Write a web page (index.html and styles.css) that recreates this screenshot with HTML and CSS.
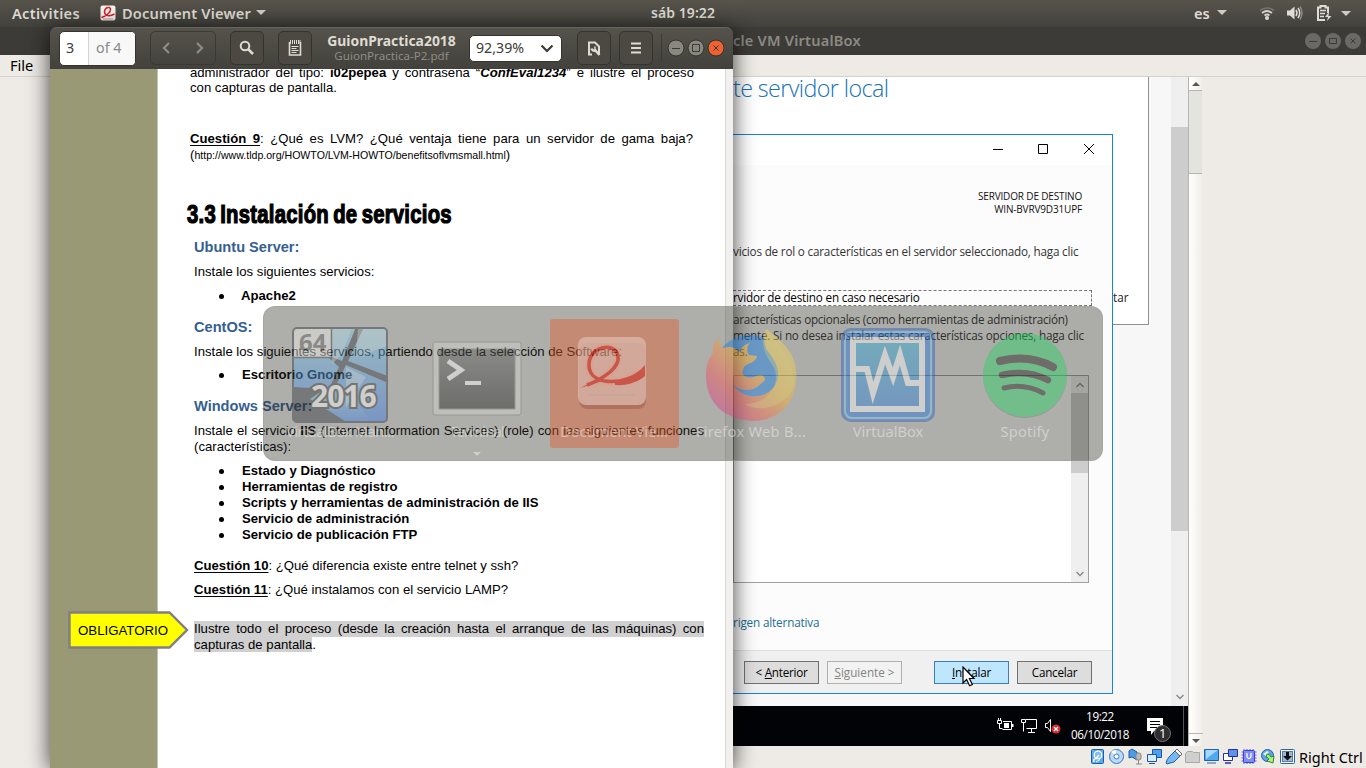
FILE: index.html
```html
<!DOCTYPE html>
<html lang="es">
<head>
<meta charset="utf-8">
<title>Document Viewer</title>
<link rel="stylesheet" href="styles.css">
</head>
<body>
<header class="topbar">
  <span class="tb-act">Activities</span>
  <svg class="tb-app" width="16" height="16" viewBox="0 0 16 16"><rect x=".5" y=".5" width="15" height="15" rx="2" fill="#f4f1ef"/><path d="M1.500 12.500C6 11 11 7.500 10.500 4C9.500 1 4.500 2.500 4.500 7C5 11.500 10 11.500 14.500 9" fill="none" stroke="#d3222a" stroke-width="1.500"/><path d="M3 14h10" stroke="#d99" stroke-width="1"/></svg>
  <span class="tb-doc">Document Viewer</span>
  <svg class="tb-car" width="10" height="6"><path d="M0 0h10L5 5z" fill="#cfccc4"/></svg>
  <span class="tb-clock">sáb 19:22</span>
  <span class="tb-lang">es</span>
  <svg class="tb-car c2" width="10" height="6"><path d="M0 0h10L5 5z" fill="#cfccc4"/></svg>
  <svg class="tb-tray" width="94" height="18" viewBox="1258 4 94 18">
    <g fill="none" stroke="#d6d3cc" stroke-width="1.700"><path d="M1260 10.500q7-5 14 0" stroke="#77746c"/><path d="M1262 13q5-4 10 0"/><path d="M1264.500 15.500q2.500-2 5 0"/></g><circle cx="1267" cy="18" r="2" fill="#dfdcd5"/>
    <path d="M1287 10.500h3l4.500-4v13l-4.500-4h-3z" fill="#dfdcd5"/><g fill="none" stroke="#dfdcd5" stroke-width="1.500"><path d="M1296 10q2 3 0 6"/><path d="M1298 8q3.500 5 0 10"/><path d="M1300 6.500q4 6.500 0 13" stroke="#8b8880"/></g>
    <path d="M1328 13V7.500h-2.500V6h-5v1.500h-2.500V20h7" fill="none" stroke="#dfdcd5" stroke-width="2"/><path d="M1320 10.500h6M1320 13.500h5M1320 16.500h4" stroke="#dfdcd5" stroke-width="1.500"/><path d="M1329 12l-4 5h3l-1 4 4.500-5h-3z" fill="#dfdcd5"/>
    <path d="M1341 11h10l-5 5z" fill="#cfccc4"/>
  </svg>
</header>

<section class="vbox">
  <div class="vb-title"><span class="vb-name">cle VM VirtualBox</span>
    <svg class="vb-btns" width="58" height="18" viewBox="1304 32 58 18"><g fill="#6b6963"><circle cx="1313" cy="41" r="8"/><circle cx="1333" cy="41" r="8"/><circle cx="1353" cy="41" r="8"/></g><path d="M1309 41.500h8M1329.500 38.500h7v5h-7zM1350.500 38.500l5 5m0-5l-5 5" fill="none" stroke="#3c3b37"/></svg>
  </div>
  <div class="vb-menu"><span class="vb-file">File</span></div>
  <div class="vb-body">
    <div class="guest">
      <div class="gs-main">
        <div class="gs-panel">
          <h1 class="gs-h">te servidor local</h1>
          <span class="gs-tar">tar</span>
        </div>
        <div class="gs-bar"><div class="gs-thumb"></div><svg width="8" height="6"><path d="M.5 1L4 4.500 7.500 1" fill="none" stroke="#888" stroke-width="1.300"/></svg></div>
      </div>
      <div class="win-task">
        <svg class="wt-ic" width="66" height="18" viewBox="996 718 66 18"><g fill="none" stroke="#fff"><path d="M1003 722.500h8.500v8h-9"/><path d="M997.500 721.500h4v3h-4zM998.500 721v-2M1000.500 721v-2M999.500 725v4.500h3"/><path d="M1026 720.500h10.500v9h-10M1031.500 730v3M1028 733.500h7"/><path d="M1021.500 720.500h4v3h-4zM1023.500 724v8.500"/><path d="M1045.500 724.500h2l3-4v12l-3-4h-2z"/></g><path d="M1004 724h5v5h-5zM1012 725h1.500v3h-1.500z" fill="#fff"/><circle cx="1056" cy="730" r="4.500" fill="#dc2a33"/><path d="M1054 728l4 4m0-4l-4 4" stroke="#fff" stroke-width="1.200"/></svg>
        <div class="wt-clock"><span class="wt-a">19:22</span><span class="wt-b">06/10/2018</span></div>
        <svg class="wt-note" width="26" height="26" viewBox="1146 717 26 26"><path d="M1147 718h16v13h-9l-3 4v-4h-4z" fill="#fff"/><path d="M1150 721.500h10M1150 724.500h10M1150 727.500h7" stroke="#000"/><circle cx="1162.500" cy="733.500" r="8" fill="#2d2d2f" stroke="#777"/><text x="1159" y="738" class="wt-one">1</text></svg>
        <i class="wt-line"></i>
      </div>
    </div>
    <div class="vb-scroll"><svg width="14" height="13"><path d="M3 9h8L7 5z" fill="#555"/></svg><i class="vs-thumb"></i><i class="vs-track"></i><svg class="vs-dn" width="14" height="13"><path d="M3 5h8L7 9z" fill="#555"/></svg></div>
  </div>
  <div class="vb-status">
    <svg width="206" height="20" viewBox="1090 747 206 20">
      <rect x="1091.500" y="749.500" width="12" height="14" rx="1" fill="#5aa9ee" stroke="#1b5ea8"/><circle cx="1098" cy="755" r="3.800" fill="#7fbdf2" stroke="#fff" stroke-width="1.300"/><path d="M1094 762q-1-3 2-3.500l3-3.500" stroke="#fff" stroke-width="1.500" fill="none"/><path d="M1096 762l4-2.500" stroke="#fff"/>
      <circle cx="1116.500" cy="756.500" r="7" fill="#b8dcfa" stroke="#3a72b8"/><path d="M1116 756l-5-4a6 6 0 0 1 5-2z" fill="#fff"/><circle cx="1116.500" cy="756.500" r="2.500" fill="#fff" stroke="#3f7fce"/>
      <path d="M1129 751l3-2 5 3v8l-5-3-3 1z" fill="#4c9be8" stroke="#1c5ba6"/><rect x="1136" y="753" width="5" height="7" rx="2" fill="#bbb" stroke="#888"/><path d="M1138.500 760v4M1136 764h6" stroke="#888"/>
      <path d="M1152.500 749.500h9v8h-9z" fill="#4aa1f0" stroke="#1c55ac"/><path d="M1147.500 754.500h9v7h-9z" fill="#d8ecfd" stroke="#1c55ac"/><path d="M1149 763.500h6" stroke="#1c55ac"/>
      <path d="M1169 757l6-6 5 5-6 6q-4 1-7 2l-1-1q1-4 3-6z" fill="#74b9f3" stroke="#225fa8"/><path d="M1175 751l2-2 5 5-2 2z" fill="#fff" stroke="#666"/>
      <path d="M1185.500 753.500l2-2h5l1 1h6v10h-14z" fill="#cfcfcf" stroke="#a8a8a8"/>
      <path d="M1204.500 749.500h14v11h-14z" fill="#4faaf2" stroke="#215faf"/><path d="M1206 750h12l-12 9z" fill="#a7d8ff"/><path d="M1207 763h9" stroke="#8ea8c4" stroke-width="2"/>
      <path d="M1223.500 753.500h9v7h-9z" fill="#fff" stroke="#2b2f9c"/><path d="M1228.500 749.500h9v7h-9z" fill="#5b93e6" stroke="#2b2f9c"/><path d="M1225 763h6" stroke="#2b2f9c" stroke-width="1.500"/>
      <path d="M1244 749v15M1247 749v15M1250 749v15M1253 749v15M1241.500 752h15M1241.500 755h15M1241.500 758h15M1241.500 761h15" stroke="#555ee0"/><rect x="1243.500" y="750.500" width="11" height="12" rx="1" fill="#7f8cf4" stroke="#3c3fd0"/><path d="M1247 753v4q2 3 4 0v-4" fill="none" stroke="#fff" stroke-width="1.300"/>
      <circle cx="1267.500" cy="755.500" r="6" fill="#5aa5e8" stroke="#2b5f9d"/><path d="M1263 754l4-3 2 1-3 4z" fill="#e4f4ff"/><path d="M1267 754q3 0 4 3l3-1-1 7-6-2 2-2q-1-2-3-2z" fill="#b5ef7d" stroke="#2d8a2d"/>
      <rect x="1280.500" y="749.500" width="14" height="14" rx="1" fill="#f2f7fc" stroke="#2b65a5"/><rect x="1282.500" y="751.500" width="10" height="10" fill="#9fb6cf" stroke="#5f7c9c"/><path d="M1286 752h3v4h3l-4.500 4.500-4.500-4.500h3z" fill="#111"/>
    </svg>
    <span class="st-ctrl">Right Ctrl</span>
  </div>
</section>

<section class="wizard">
  <div class="wz-title"><svg width="106" height="12" viewBox="992 143 106 12"><g fill="none" stroke="#000"><path d="M993 149.500h10M1038.500 144.500h9v9h-9zM1084 144l10 10m0-10l-10 10"/></g></svg></div>
  <div class="wz-body">
    <div class="wz-dest"><span class="wd-a">SERVIDOR DE DESTINO</span><span class="wd-b">WIN-BVRV9D31UPF</span></div>
    <p class="wl1">vicios de rol o características en el servidor seleccionado, haga clic</p>
    <div class="wz-dot"><span class="wl2">rvidor de destino en caso necesario</span></div>
    <p class="wl3">aracterísticas opcionales (como herramientas de administración)</p>
    <p class="wl4">mente. Si no desea instalar estas características opciones, haga clic</p>
    <p class="wl5">as.</p>
    <div class="wz-list"><div class="wz-sb"><svg width="8" height="6"><path d="M.5 5L4 1.500 7.500 5" fill="none" stroke="#888" stroke-width="1.300"/></svg><i></i><svg width="8" height="6"><path d="M.5 1L4 4.500 7.500 1" fill="none" stroke="#888" stroke-width="1.300"/></svg></div></div>
    <p class="wlink">rigen alternativa</p>
  </div>
  <div class="wz-foot">
    <button class="bt"><span class="b1">&lt; <u>A</u>nterior</span></button>
    <button class="bt dis"><span class="b2"><u>S</u>iguiente &gt;</span></button>
    <button class="bt pri"><span class="b3"><u>I</u>nstalar</span></button>
    <button class="bt"><span class="b4">Cancelar</span></button>
  </div>
</section>
<svg class="cursor" width="14" height="22" viewBox="0 0 14 22"><path d="M1 1v16l3.600-3.400 3 6.200 2.800-1.300-3-6H12z" fill="#fff" stroke="#000" stroke-width="1.200"/></svg>

<section class="evince">
  <div class="ev-head">
    <div class="ev-page"><b class="ep-n">3</b><span class="ep-of">of 4</span></div>
    <div class="ev-nav"><svg width="66" height="34"><path d="M19 12l-5 5 5 5M47 12l5 5-5 5" fill="none" stroke="#8f8c83" stroke-width="2.200"/></svg></div>
    <div class="ev-b find"><svg width="34" height="34"><circle cx="15" cy="15" r="4.300" fill="none" stroke="#dfdbd2" stroke-width="2"/><path d="M18 18l5 5" stroke="#dfdbd2" stroke-width="2.500"/></svg></div>
    <div class="ev-b note"><svg width="34" height="34"><path d="M11.500 11v13h11v-13" fill="none" stroke="#dfdbd2" stroke-width="1.600"/><path d="M12.500 9v4M14.500 9v4M16.500 9v4M18.500 9v4M20.500 9v4M22 9v4" stroke="#dfdbd2"/><path d="M13.500 15.500h7M13.500 17.500h5M13.500 19.500h7M13.500 21.500h5" stroke="#dfdbd2"/></svg></div>
    <div class="ev-ttl"><b class="et1">GuionPractica2018</b><span class="et2">GuionPractica-P2.pdf</span></div>
    <div class="ev-zoom"><span class="ez">92,39%</span><svg width="14" height="9"><path d="M1.500 1.500L7 7l5.500-5.500" fill="none" stroke="#3c3b37" stroke-width="2.200"/></svg></div>
    <div class="ev-b tool"><svg width="34" height="34"><path d="M15 23.500h-3v-12h6l4 4v8" fill="none" stroke="#dfdbd2" stroke-width="2"/><path d="M14.500 17.500a3 3 0 0 0 4 2l4 4.500" fill="none" stroke="#dfdbd2" stroke-width="2.500"/><path d="M18 15.500v4" stroke="#dfdbd2" stroke-width="1.500"/></svg></div>
    <div class="ev-b menu"><svg width="34" height="34"><path d="M12 12.500h10M12 17h10M12 21.500h10" stroke="#dfdbd2" stroke-width="2"/></svg></div>
    <svg class="ev-win" width="64" height="34" viewBox="660 31 64 34"><path d="M661.500 34v28" stroke="#3b3a35"/><g stroke="#34332f"><circle cx="676" cy="48" r="8" fill="#8a877f"/><circle cx="696" cy="48" r="8" fill="#8a877f"/><circle cx="716" cy="48" r="8" fill="#ee6131"/></g><path d="M672 48.500h8M692.500 44.500h7v7h-7zM713.500 45.500l5 5m0-5l-5 5" fill="none" stroke="#3a3935"/></svg>
  </div>
  <div class="ev-doc">
    <div class="olive"></div>
    <article class="page">
      <p class="j p1">administrador del tipo: <b>i02pepea</b> y contraseña “<b><i>ConfEval1234</i></b>” e ilustre el proceso</p>
      <p class="o">con capturas de pantalla.</p>
      <p class="j p2"><b><u>Cuestión 9</u></b>: ¿Qué es LVM? ¿Qué ventaja tiene para un servidor de gama baja?</p>
      <p class="p2b">(<span class="url">http://www.tldp.org/HOWTO/LVM-HOWTO/benefitsoflvmsmall.html</span>)</p>
      <h2><span class="imp">3.3 Instalación de servicios</span></h2>
      <h3 class="m9">Ubuntu Server:</h3>
      <p class="m9">Instale los siguientes servicios:</p>
      <ul class="m8"><li class="ap"><b>Apache2</b></li></ul>
      <h3 class="m15">CentOS:</h3>
      <p class="m9">Instale los siguientes servicios, partiendo desde la selección de Software:</p>
      <ul class="m7"><li><b>Escritorio Gnome</b></li></ul>
      <h3 class="m15">Windows Server:</h3>
      <p class="j m9">Instale el servicio <b>IIS</b> (Internet Information Services) (role) con las siguientes funciones</p>
      <p>(características):</p>
      <ul class="m8">
        <li><b>Estado y Diagnóstico</b></li><li><b>Herramientas de registro</b></li><li><b>Scripts y herramientas de administración de IIS</b></li><li><b>Servicio de administración</b></li><li><b>Servicio de publicación FTP</b></li>
      </ul>
      <p class="m15"><b><u>Cuestión 10</u></b>: ¿Qué diferencia existe entre telnet y ssh?</p>
      <p class="m8"><b><u>Cuestión 11</u></b>: ¿Qué instalamos con el servicio LAMP?</p>
      <p class="j m23 hl">Ilustre todo el proceso (desde la creación hasta el arranque de las máquinas) con</p>
      <p><span class="hl">capturas de pantalla</span>.</p>
    </article>
    <div class="ev-edge"></div>
    <div class="callout"><svg width="121" height="38"><path d="M1.500 1.500h100l17.500 17.500-17.500 17.500h-100z" fill="#ff0" stroke="#808080" stroke-width="2.400"/></svg><span>OBLIGATORIO</span></div>
  </div>
</section>

<nav class="switcher">
  <div class="sw"><svg width="96" height="96" viewBox="0 0 96 96"><defs><linearGradient id="a" x1="0" y1="0" x2="0" y2="1"><stop offset="0" stop-color="#7fd0e8"/><stop offset="1" stop-color="#2f72e8"/></linearGradient><clipPath id="c"><rect x="1" y="1" width="94" height="94" rx="4"/></clipPath></defs><g clip-path="url(#c)"><rect width="96" height="96" fill="#2a2d36"/><path d="M38 0h26L50 34 38 29zM72 0h24v49L56 34zM0 31h37l10 9-10 22L0 60zM54 38l42 18v40H62L44 78 42 62z" fill="url(#a)"/><path d="M36 60l20 4 24 32H56L18 72z" fill="url(#a)"/><path d="M40 1h20l-10 26-10 10zM66 1h29v18L64 30zM54 40l20 10-20 30z" fill="#e6fbff" opacity=".45"/><rect width="39" height="30" fill="#f2f2f2"/></g><rect x="1" y="1" width="94" height="94" rx="4" fill="none" stroke="#2a2d36" stroke-width="2"/><path d="M39.500 1v29.500H1" fill="none" stroke="#333" stroke-width="1.500"/><text x="7" y="24" class="i64">64</text><text x="19" y="80" class="i2016">2016</text></svg><span class="s1">VirtualBox Man...</span></div>
  <div class="sw"><svg width="96" height="96" viewBox="0 0 96 96"><defs><linearGradient id="t" x1="0" y1="0" x2="0" y2="1"><stop offset="0" stop-color="#595959"/><stop offset=".5" stop-color="#343434"/><stop offset="1" stop-color="#111"/></linearGradient></defs><rect x="4" y="15" width="88" height="73" rx="2" fill="#d7d7d4" stroke="#777"/><rect x="10" y="22" width="76" height="60" fill="url(#t)" stroke="#777"/><path d="M19 34l13 9-13 9" fill="none" stroke="#fff" stroke-width="5"/><path d="M36 56h16" stroke="#fff" stroke-width="4"/></svg><span class="s2">Terminal</span><i class="sw-arrow"></i></div>
  <div class="sw on"><svg width="96" height="96" viewBox="0 0 96 96"><rect x="13" y="16" width="67" height="66" rx="8" fill="#712d1e" opacity=".6"/><rect x="12" y="10" width="68" height="68" rx="8" fill="#fff" opacity=".75"/><path d="M22 68h47" stroke="#ccc" stroke-width="2"/><g fill="none" stroke="#f0c4bc" stroke-width="8"><path d="M21 58C39 51 54 40 52 29C49 14 22 19 23 39C24 58 55 59 75 45"/></g><path d="M21 58C39 51 54 40 52 29C49 14 22 19 23 39C24 58 55 59 75 45" fill="none" stroke="#d00d0d" stroke-width="3.600"/><path d="M14 61l20-10 3 3zM49 54C62 53 71 47 79 38v11C72 55 61 59 49 58z" fill="#d00d0d"/></svg><span class="s3">Document Vie...</span></div>
  <div class="sw"><svg width="96" height="96" viewBox="0 0 96 96"><defs><linearGradient id="f" x1="1" y1="0" x2="0" y2="1"><stop offset="0" stop-color="#fff36a"/><stop offset=".45" stop-color="#ffad25"/><stop offset=".7" stop-color="#ff4e4e"/><stop offset="1" stop-color="#c020b8"/></linearGradient></defs><circle cx="47" cy="45" r="37" fill="#0e7df0"/><path d="M16 11c0 5 1 8 4 10 7-2 12-1 16 4 3-5 6-8 11-9-4 5-3 9-1 12l8 1c-1 7-10 7-13 11l-2 6c3 5 7 5 12 4 6-3 11-2 11 3-5 5-10 10-18 10-5 0-10-2-14-5 7 9 15 12 24 11 14-1 22-12 21-24-1-10-7-16-11-22-5-9-2-18 0-21 10 10 27 19 29 41 3 28-14 51-43 51C21 93 3 75 3 49c0-13 4-19 7-23-1-7 2-12 6-15z" fill="url(#f)"/><path d="M62 2c-6 17 2 28 8 37 9 17-4 38-28 38 12 9 39 4 48-15 7-22-17-49-28-60z" fill="#fff04f" opacity=".4"/></svg><span class="s4">Firefox Web B...</span></div>
  <div class="sw"><svg width="96" height="96" viewBox="0 0 96 96"><defs><linearGradient id="v" x1="0" y1="0" x2="0" y2="1"><stop offset="0" stop-color="#28abd9"/><stop offset="1" stop-color="#2477dc"/></linearGradient></defs><rect x="2" y="2" width="92" height="92" rx="9" fill="#1d6fe0" stroke="#2b55b5" stroke-width="2"/><rect x="5" y="5" width="86" height="86" rx="7" fill="none" stroke="#76c6ec" stroke-width="2"/><rect x="13" y="13" width="69" height="69" fill="url(#v)" stroke="#fff" stroke-width="6"/><path d="M15 42h12l6 24L45 28l8 22 7-22 8 28h13" fill="none" stroke="#fff" stroke-width="6"/></svg><span class="s5">VirtualBox</span></div>
  <div class="sw"><svg width="96" height="96" viewBox="0 0 96 96"><circle cx="48" cy="49" r="42" fill="#444" opacity=".5"/><circle cx="48" cy="48" r="42" fill="#1ed760"/><g fill="none" stroke="#191414" stroke-linecap="round"><path d="M23 34q29-7 53 6" stroke-width="8"/><path d="M25 48q25-6 46 5" stroke-width="6.500"/><path d="M27 61q20-5 39 5" stroke-width="5"/></g></svg><span class="s6">Spotify</span></div>
</nav>
</body>
</html>
```
FILE: styles.css
```css
* { box-sizing: border-box; }
body { margin: 0; width: 1366px; height: 768px; overflow: hidden; position: relative; background: #eeebe6; font-family: "Noto Sans", sans-serif; font-size: 14px; color: #000; }
h1, h2, h3, p, ul { margin: 0; padding: 0; font-weight: normal; }
span, p, h1, b { white-space: nowrap; }
svg { display: block; flex: none; }

.topbar { height: 27px; padding-bottom: 1px; display: flex; align-items: center; position: relative; background: linear-gradient(#57544b, #42413c); color: #dfdbd2; font-weight: 600; font-size: 14.600px; line-height: 20px; }
.tb-act { margin-left: 12px; width: 88px; letter-spacing: .28px; }
.tb-doc { margin-left: 6px; width: 134px; letter-spacing: .16px; }
.tb-clock { margin-left: 385px; width: 64px; font-size: 14px; letter-spacing: .07px; }
.tb-lang { margin-left: 479px; width: 23px; }
.tb-tray { margin-left: 31px; }

.vbox { height: 741px; display: flex; flex-direction: column; }
.vb-title { height: 28px; background: #3c3b37; display: flex; align-items: center; color: #8d8a83; font-weight: 600; font-size: 14.600px; letter-spacing: .2px; justify-content: space-between; }
.vb-name { margin-left: 733px; padding-bottom: 2px; }
.vb-btns { margin-right: 4px; }
.vb-menu { height: 22px; border-bottom: 1px solid #d5d1cb; padding-left: 10px; font-size: 14.600px; line-height: 20px; background: #eeebe6; }
.vb-body { height: 669px; display: flex; }
.guest { width: 1023px; margin-left: 165px; display: flex; flex-direction: column; }
.gs-main { height: 629px; display: flex; background: #f7f7f7; justify-content: space-between; }
.gs-panel { width: 984px; height: 248px; background: #fff; border-right: 1px solid #919191; border-bottom: 1px solid #919191; }
.gs-h { font-family: "Open Sans", sans-serif; font-weight: 300; font-size: 23.300px; line-height: 22px; height: 24px; letter-spacing: -.6px; color: #1673b8; margin-left: 568px; }
.gs-tar { display: block; margin: 188px 0 0 948px; font: 11.700px/16px "Open Sans", sans-serif; color: #222; }
.gs-bar { width: 17px; padding-top: 50px; background: #efefef; display: flex; flex-direction: column; align-items: center; justify-content: space-between; padding-bottom: 6px; }
.gs-thumb { width: 17px; height: 404px; background: #cdcdcd; }
.win-task { height: 40px; background: #020306; display: flex; align-items: center; color: #fff; font: 11.700px/18px "Open Sans", sans-serif; letter-spacing: -.4px; }
.wt-ic { margin-left: 831px; }
.wt-clock { margin-left: 8px; padding-bottom: 2px; width: 60px; display: flex; flex-direction: column; align-items: center; }
.wt-note { margin-left: 16px; margin-top: 8px; }
.wt-one { font: 13px "Open Sans", sans-serif; fill: #fff; }
.wt-line { width: 1px; height: 40px; background: #555; margin-left: 11px; }
.vb-scroll { width: 14px; border-left: 1px solid #b8b5b0; background: linear-gradient(90deg, #fff, #f0eeea); display: flex; flex-direction: column; }
.vs-thumb { height: 84px; background: #e3e3df; border-top: 1px solid #b8b5b0; border-bottom: 1px solid #b8b5b0; }
.vs-track { flex: 1; }
.vs-dn { border-top: 1px solid #b8b5b0; }
.vb-status { height: 22px; display: flex; align-items: center; padding-left: 1090px; gap: 3px; font-size: 14.500px; }

.wizard { position: absolute; left: 700px; top: 134px; width: 413px; height: 560px; border: 1px solid #1883d7; background: #fcfcfc; display: flex; flex-direction: column; font: 11.700px/16px "Open Sans", sans-serif; letter-spacing: -.19px; color: #333; }
.wz-title { height: 30px; background: #fff; display: flex; align-items: center; justify-content: flex-end; padding: 0 14px 2px 0; }
.wz-body { height: 485px; padding-left: 32px; display: flex; flex-direction: column; }
.wz-dest { display: flex; flex-direction: column; align-items: flex-end; margin: 25px 30px 0 0; font-size: 10px; line-height: 13px; letter-spacing: -.16px; color: #111; }
.wl1 { margin-top: 27px; }
.wz-dot { margin-top: 31px; width: 359px; height: 16px; border: 1px dashed #777; border-left: 0; line-height: 12px; color: #000; }
.wl3 { margin-top: 5px; letter-spacing: -.27px; }
.wz-list { margin-top: 16px; height: 208px; width: 356px; background: #fff; border: 1px solid #a0a0a0; display: flex; justify-content: flex-end; }
.wz-sb { width: 17px; background: #efefef; display: flex; flex-direction: column; align-items: center; padding: 6px 0 5px; }
.wz-sb i { width: 17px; height: 80px; margin: 5px 0 auto; background: #cdcdcd; }
.wlink { margin-top: 31px; letter-spacing: -.15px; color: #1c6f91; }
.wz-foot { height: 43px; border-top: 1px solid #dfdfdf; background: #f0f0f0; display: flex; padding: 10px 0 0 43px; }
.bt { width: 75px; height: 23px; margin: 0 8px 0 0; padding: 0 0 2px; border: 1px solid #707070; background: #ddd; font: 11.700px/16px "Open Sans", sans-serif; letter-spacing: -.25px; color: #000; }
.dis { border-color: #b0b0b0; background: #f2f2f2; color: #838383; margin-right: 32px; letter-spacing: 0; }
.pri { border-color: #3c7fb1; background: #bee6fd; }
.cursor { position: absolute; left: 962px; top: 666px; }

.evince { position: absolute; left: 50px; top: 27px; width: 683px; height: 741px; border-radius: 7px 7px 0 0; box-shadow: 0 3px 22px rgba(0,0,0,.75); display: flex; flex-direction: column; }
.ev-head { height: 42px; border-radius: 7px 7px 0 0; background: linear-gradient(#55534b, #42413c); border-top: 1px solid #66645b; display: flex; align-items: center; color: #dfdbd2; padding: 0 0 1px 9px; }
.ev-page { width: 77px; height: 35px; border: 1px solid #34332f; border-radius: 5px; background: #fff; display: flex; line-height: 32px; overflow: hidden; color: #3c3b37; font-size: 14.300px; }
.ep-n { width: 29px; padding-left: 6px; font-weight: 400; border-right: 1px solid #d5d5d5; }
.ep-of { padding-left: 7px; flex: 1; background: #f8f8f8; color: #8a8a8a; }
.ev-nav { width: 66px; height: 34px; margin-left: 14px; border: 1px solid #3a3934; border-radius: 5px; }
.ev-nav svg, .ev-b svg { margin: -1px; }
.ev-b { width: 34px; height: 34px; border: 1px solid #34332f; border-radius: 5px; background: #4b4942; }
.find { margin-left: 14px; }
.note { margin-left: 14px; }
.ev-ttl { width: 129px; margin-left: 15px; display: flex; flex-direction: column; align-items: center; font-size: 13.900px; line-height: 15px; }
.et2 { color: #8f8c83; font-size: 11.600px; }
.ev-zoom { width: 93px; height: 27px; margin-left: 13px; border: 1px solid #34332f; border-radius: 5px; background: #fff; color: #3c3b37; display: flex; align-items: center; justify-content: space-between; padding: 0 7px 0 6px; font-size: 14.200px; line-height: 20px; }
.tool { margin-left: 15px; }
.menu { margin-left: 8px; }
.ev-win { margin-left: 7px; }
.ev-doc { height: 699px; display: flex; position: relative; background: #fff; }
.olive { width: 108px; background: #999976; border-right: 1px solid #c4c4ae; }
.page { width: 567px; padding-left: 36px; overflow: hidden; font: 13.150px/16px "Liberation Sans", sans-serif; background: #fff; }
.page p, .page li, .page h3 { height: 16px; }
.page u { text-underline-offset: 2px; }
.page .j { width: 510px; text-align-last: justify; white-space: normal; }
.page .p1 { margin: -4px 0 0 -4px; width: 504px; }
.page .o { margin: -1px 0 0 -4px; }
.page .p2 { margin: 35px 0 0 -4px; width: 503px; }
.page .p2b { margin: 0 0 0 -4px; }
.url { font-size: 10.600px; }
.page h2 { height: 32px; margin: 35px 0 0 -7px; }
.imp { display: inline-block; font: bold 25px/32px "Liberation Sans", sans-serif; letter-spacing: .3px; word-spacing: -2px; transform: scaleX(.812); transform-origin: 0 0; -webkit-text-stroke: 1.200px #000; }
.page h3 { font-weight: bold; font-size: 14.600px; color: #365f91; }
.m7 { margin-top: 7px; } .m8 { margin-top: 8px; } .m9 { margin-top: 9px; } .m15 { margin-top: 15px; } .m23 { margin-top: 23px; }
.page ul { list-style: none; }
.page li { display: flex; padding-left: 25px; align-items: center; }
.page li::before { content: ""; width: 5px; height: 5px; border-radius: 50%; background: #000; margin-right: 18px; margin-top: 1px; }
.page li.ap::before { margin-right: 17px; }
.hl { background: #d0d0d0; }
.ev-edge { width: 8px; background: #f1f0ee; border-left: 1px solid #dcdad6; }
.callout { position: absolute; left: 18px; top: 542px; }
.callout span { position: absolute; left: 10px; top: 12px; font: 13.250px/16px "Liberation Sans", sans-serif; }

.switcher { position: absolute; left: 263px; top: 306px; width: 840px; height: 155px; border-radius: 12px; background: rgba(45,45,35,.385); border: 1px solid rgba(160,160,155,.5); padding: 12px 12px; display: flex; gap: 8px; color: #fff; font-size: 14.600px; }
.sw { width: 129px; height: 129px; padding: 8px 1px 0 0; display: flex; flex-direction: column; align-items: center; border-radius: 3px; }
.sw svg, .sw span { opacity: .41; }
.sw span { line-height: 16px; }
.s1 { letter-spacing: -.5px; }
.s2 { letter-spacing: -.75px; }
.s4 { letter-spacing: .28px; }
.s6 { letter-spacing: .25px; }
.on { background: rgba(233,84,32,.4); }
.i64 { font: bold 24px "Noto Sans", sans-serif; fill: #555; }
.i2016 { font: bold 30px "Noto Sans", sans-serif; letter-spacing: -1px; fill: #fff; stroke: #222; stroke-width: 4px; paint-order: stroke; }
.sw-arrow { border: 4px solid transparent; border-top-color: rgba(255,255,255,.41); margin-top: 13px; }
```
